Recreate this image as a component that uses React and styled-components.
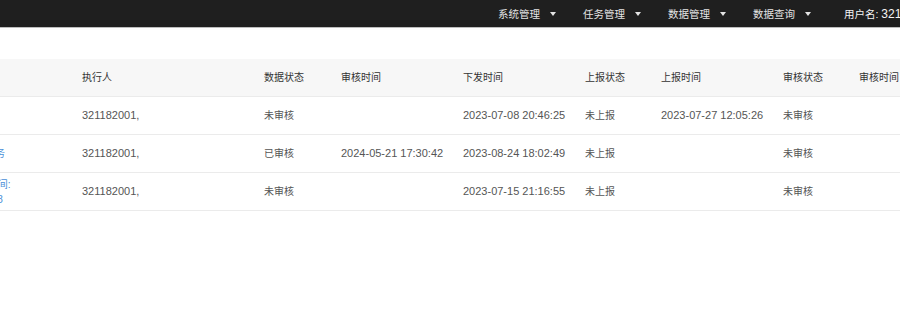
import { useLayoutEffect, useRef } from "react";
import styled, { createGlobalStyle } from "styled-components";

const GlobalStyle = createGlobalStyle`
  html, body {
    margin: 0;
    background: #fff;
    font-family: "Liberation Sans", "Noto Sans CJK SC", sans-serif;
    font-size: 10px;
  }
`;

const Viewport = styled.div`
  width: 100vw;
  overflow-x: auto;
  scrollbar-width: none;
  &::-webkit-scrollbar {
    display: none;
  }
`;

const Page = styled.div`
  width: 1240px;
`;

const TopBar = styled.div`
  height: 27px;
  background: #1f1f1f;
  border-bottom: 1px solid #bdbdbd;
  display: flex;
  align-items: center;
  padding: 0 37px 0 20px;
  font-size: 10.5px;
`;

const Brand = styled.div`
  color: #fff;
  font-size: 13px;
  font-weight: bold;
`;

const Nav = styled.div`
  margin-left: auto;
  display: flex;
  align-items: center;
  height: 100%;
`;

const NavItem = styled.div`
  width: 85px;
  box-sizing: border-box;
  padding: 0 13px;
  display: flex;
  align-items: center;
  gap: 10px;
  color: #e4e4e4;
  white-space: nowrap;
`;

const Caret = styled.span`
  width: 0;
  height: 0;
  border-left: 3.5px solid transparent;
  border-right: 3.5px solid transparent;
  border-top: 4px solid #e4e4e4;
`;

const User = styled.div`
  width: 125px;
  box-sizing: border-box;
  margin-left: 6px;
  padding: 0 13px;
  color: #f4f4f4;
  white-space: nowrap;
  overflow: hidden;
`;

const UserId = styled.span`
  font-size: 12px;
`;

const Logout = styled.div`
  padding: 0 13px;
  color: #e4e4e4;
`;

const TableWrap = styled.div`
  margin: 31px 20px 0;
`;

const COLUMNS = "50px 202px 182px 77px 122px 122px 76px 122px 76px 122px 1fr";

const Row = styled.div`
  display: grid;
  grid-template-columns: ${COLUMNS};
  height: 37px;
  background: ${(p) => (p.$head ? "#f7f7f7" : "#fff")};
  border-bottom: 1px solid #ebebeb;
  color: ${(p) => (p.$head ? "#333" : "#555")};
`;

const Cell = styled.div`
  padding: 0 10px;
  display: flex;
  flex-direction: column;
  justify-content: center;
  white-space: nowrap;
  line-height: 15px;
  font-size: ${(p) => (p.$num ? "11px" : "10px")};
`;

const Link = styled.span`
  color: #4a8fd8;
`;

const headers = [
  "序号",
  "任务名称",
  "执行人",
  "数据状态",
  "审核时间",
  "下发时间",
  "上报状态",
  "上报时间",
  "审核状态",
  "审核时间",
  "操作",
];

const rows = [
  {
    no: 1,
    name: ["月度巡检任务"],
    executor: "321182001,",
    dataStatus: "未审核",
    auditTime: "",
    issued: "2023-07-08 20:46:25",
    reportStatus: "未上报",
    reportTime: "2023-07-27 12:05:26",
    auditStatus: "未审核",
  },
  {
    no: 2,
    name: ["2023年度 数据采集上报任务"],
    executor: "321182001,",
    dataStatus: "已审核",
    auditTime: "2024-05-21 17:30:42",
    issued: "2023-08-24 18:02:49",
    reportStatus: "未上报",
    reportTime: "",
    auditStatus: "未审核",
  },
  {
    no: 3,
    name: ["2023年第3季度数据填报时间:", "截止于2023-07-28 23:59:58"],
    executor: "321182001,",
    dataStatus: "未审核",
    auditTime: "",
    issued: "2023-07-15 21:16:55",
    reportStatus: "未上报",
    reportTime: "",
    auditStatus: "未审核",
  },
];

export default function App() {
  const viewport = useRef(null);

  useLayoutEffect(() => {
    if (viewport.current) viewport.current.scrollLeft = 200;
  }, []);

  return (
    <>
      <GlobalStyle />
      <Viewport ref={viewport}>
        <Page>
          <TopBar>
            <Brand>数据采集管理平台</Brand>
            <Nav>
              {["系统管理", "任务管理", "数据管理", "数据查询"].map((m) => (
                <NavItem key={m}>
                  {m}
                  <Caret />
                </NavItem>
              ))}
              <User>
                用户名: <UserId>321182001</UserId>
              </User>
              <Logout>退出</Logout>
            </Nav>
          </TopBar>
          <TableWrap>
            <Row $head>
              {headers.map((h, i) => (
                <Cell key={i}>{h}</Cell>
              ))}
            </Row>
            {rows.map((r) => (
              <Row key={r.no}>
                <Cell $num>{r.no}</Cell>
                <Cell>
                  {r.name.map((line) => (
                    <Link key={line}>{line}</Link>
                  ))}
                </Cell>
                <Cell $num>{r.executor}</Cell>
                <Cell>{r.dataStatus}</Cell>
                <Cell $num>{r.auditTime}</Cell>
                <Cell $num>{r.issued}</Cell>
                <Cell>{r.reportStatus}</Cell>
                <Cell $num>{r.reportTime}</Cell>
                <Cell>{r.auditStatus}</Cell>
                <Cell $num></Cell>
                <Cell>
                  <Link>查看</Link>
                </Cell>
              </Row>
            ))}
          </TableWrap>
        </Page>
      </Viewport>
    </>
  );
}
